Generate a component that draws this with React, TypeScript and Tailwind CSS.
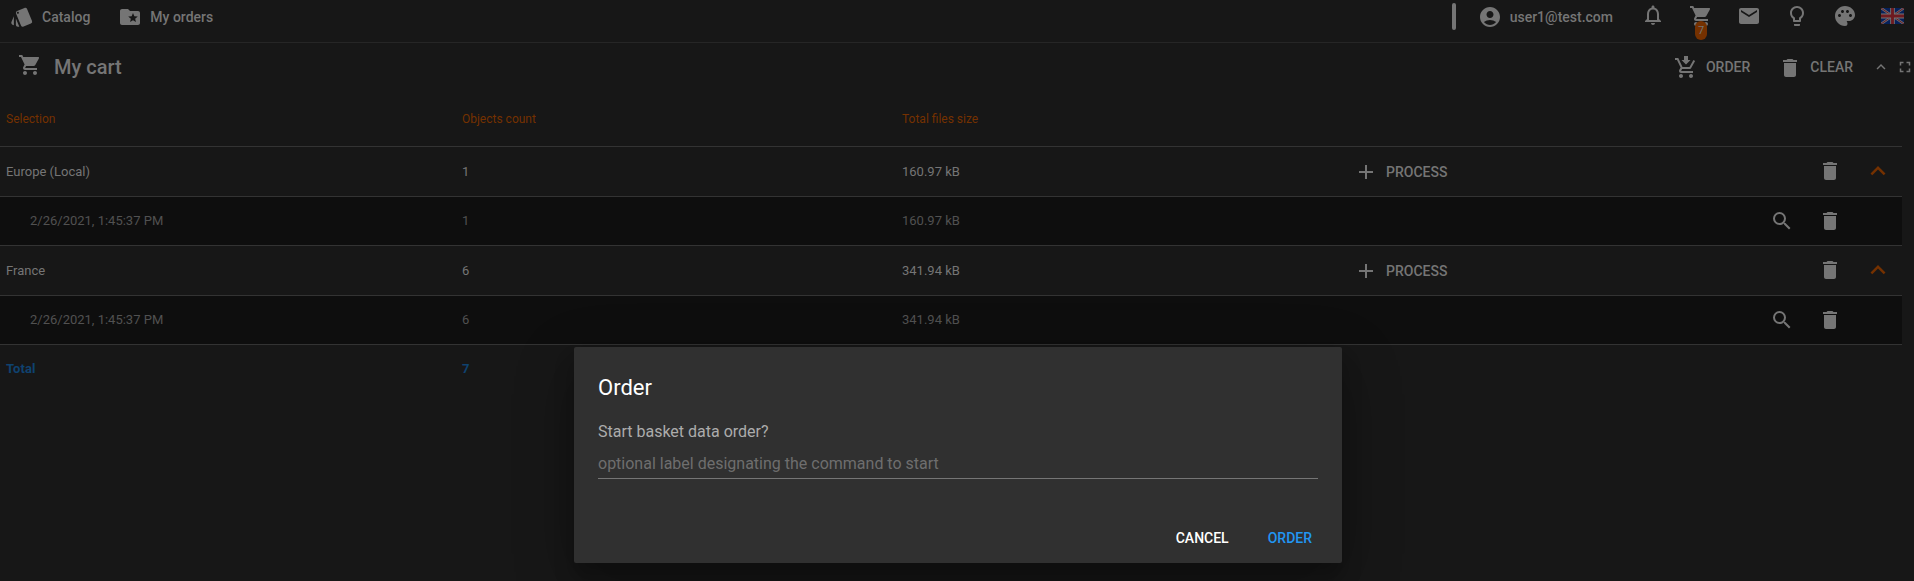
import type { ReactNode } from "react";
import {
  MdAccountCircle, MdAdd, MdDelete, MdExpandLess, MdFolderSpecial, MdFullscreen,
  MdLightbulbOutline, MdMail, MdNotificationsNone, MdPalette, MdSearch, MdShoppingCart, MdStyle,
} from "react-icons/md";

function CartDown() {
  return (
    <svg viewBox="0 0 24 24" className="mt-0.5 size-6 shrink-0" fill="currentColor">
      <path d="M10 0h4v4h2.500L12 8.500 7.500 4H10z" />
      <path d="M9 20C9 21.100 8.100 22 7 22S5 21.100 5 20 5.900 18 7 18 9 18.900 9 20M17 18C15.900 18 15 18.900 15 20S15.900 22 17 22 19 21.100 19 20 18.100 18 17 18M7.200 14.800V14.700L8.100 13H15.500C16.200 13 16.900 12.600 17.200 12L21.100 5L19.400 4L15.500 11H8.500L4.300 2H1V4H3L6.600 11.600L5.200 14C5.100 14.300 5 14.600 5 15C5 16.100 5.900 17 7 17H19V15H7.400C7.300 15 7.200 14.900 7.200 14.800" />
    </svg>
  );
}

function Flag() {
  return (
    <svg viewBox="0 0 60 40" preserveAspectRatio="none" className="h-4 w-[23px]">
      <rect width="60" height="40" fill="#06205a" />
      <path d="M0 0l60 40M60 0L0 40" stroke="#6c6c70" strokeWidth="6" />
      <path d="M0 0l60 40M60 0L0 40" stroke="#6b1a22" strokeWidth="2.500" />
      <path d="M30 0v40M0 20h60" stroke="#757575" strokeWidth="12" />
      <path d="M30 0v40M0 20h60" stroke="#6e1a20" strokeWidth="7.500" />
    </svg>
  );
}

const cols = "grid grid-cols-[462px_440px_456px_544px] items-center";

function GroupRow({ name, count, size }: { name: string; count: string; size: string }) {
  return (
    <div className={`${cols} h-[50px] border-b border-[#333333]`}>
      <span className="pl-1.5">{name}</span>
      <span>{count}</span>
      <span>{size}</span>
      <div className="flex items-center">
        <MdAdd className="-ml-1 size-6" />
        <span className="ml-2 text-sm leading-6 font-medium">PROCESS</span>
        <MdDelete className="mr-[21px] mb-px ml-auto size-6" />
        <MdExpandLess className="mr-[9px] mb-px size-[30px] text-[#753100]" />
      </div>
    </div>
  );
}

function DateRow({ date, count, size }: { date: string; count: string; size: string }) {
  return (
    <div className={`${cols} h-[49px] border-b border-[#333333] bg-[#0e0e0e] text-[#515151]`}>
      <span className="pl-[30px]">{date}</span>
      <span>{count}</span>
      <span>{size}</span>
      <div className="flex items-center justify-end gap-6 pr-[60px] text-[#757575]">
        <MdSearch className="size-6" />
        <MdDelete className="size-6" />
      </div>
    </div>
  );
}

function NavItem({ icon, label }: { icon: ReactNode; label: string }) {
  return (
    <div className="flex items-center gap-2">
      {icon}
      <span className="font-medium">{label}</span>
    </div>
  );
}

export default function App() {
  return (
    <div className="relative h-[581px] w-[1914px] overflow-hidden bg-[#171717] font-['Roboto',sans-serif] text-[13px] text-[#757575]">
      <header className="flex h-[43px] items-center border-b border-[#262626] pb-2 text-sm">
        <div className="flex items-center gap-7 pl-2.5">
          <NavItem icon={<MdStyle className="size-6" />} label="Catalog" />
          <NavItem icon={<MdFolderSpecial className="size-6" />} label="My orders" />
        </div>
        <div className="ml-auto flex items-center pr-2.5">
          <div className="mr-[22px] mb-px h-[27px] w-1 rounded-sm bg-[#757575]" />
          <NavItem icon={<MdAccountCircle className="size-6" />} label="user1@test.com" />
          <div className="mb-0.5 ml-7 flex items-center gap-6">
            <MdNotificationsNone className="mb-0.5 size-6" />
            <div className="relative">
              <MdShoppingCart className="size-6" />
              <span className="absolute top-[17px] left-1.5 flex h-[19px] w-3 items-center justify-center rounded-full bg-[#753100] text-[11px]">7</span>
            </div>
            <MdMail className="size-6" />
            <MdLightbulbOutline className="size-6" />
            <MdPalette className="size-6" />
            <Flag />
          </div>
        </div>
      </header>

      <div className="flex h-12 items-center">
        <MdShoppingCart className="mb-1 ml-[18px] size-6" />
        <h1 className="ml-3 text-xl font-medium">My cart</h1>
        <div className="ml-auto flex items-center text-sm font-medium">
          <CartDown />
          <span className="ml-2">ORDER</span>
          <MdDelete className="mt-0.5 ml-7 size-6" />
          <span className="ml-2">CLEAR</span>
          <MdExpandLess className="ml-[19px] size-[18px]" />
          <MdFullscreen className="ml-1.5 size-[18px]" />
        </div>
      </div>

      <main className="w-[1902px]">
        <div className={`${cols} h-14 border-b border-[#333333] text-xs text-[#753100]`}>
          <span className="pl-1.5">Selection</span>
          <span>Objects count</span>
          <span>Total files size</span>
        </div>
        <GroupRow name="Europe (Local)" count="1" size="160.97 kB" />
        <DateRow date="2/26/2021, 1:45:37 PM" count="1" size="160.97 kB" />
        <GroupRow name="France" count="6" size="341.94 kB" />
        <DateRow date="2/26/2021, 1:45:37 PM" count="6" size="341.94 kB" />
        <div className={`${cols} h-12 font-bold text-[#0f426f]`}>
          <span className="pl-1.5 tracking-[0.1px]">Total</span>
          <span>7</span>
        </div>
      </main>

      <div role="dialog" className="absolute top-[347px] left-[574px] flex h-[216px] w-[768px] flex-col rounded-xs bg-[#303030] px-6 shadow-[0_19px_60px_rgba(0,0,0,0.3),0_15px_20px_rgba(0,0,0,0.22)]">
        <h2 className="pt-[25px] text-[22px] leading-8 text-white">Order</h2>
        <p className="mt-4 text-base leading-6 text-[#acacac]">Start basket data order?</p>
        <div className="h-[35px] border-b border-[#757575] pt-2 text-base leading-6 text-[#6e6e6e]">optional label designating the command to start</div>
        <div className="mt-auto flex justify-end gap-[39px] pr-1.5 pb-3.5 text-sm leading-[22px] font-medium">
          <span className="text-white">CANCEL</span>
          <span className="text-[#2196f3]">ORDER</span>
        </div>
      </div>
    </div>
  );
}
